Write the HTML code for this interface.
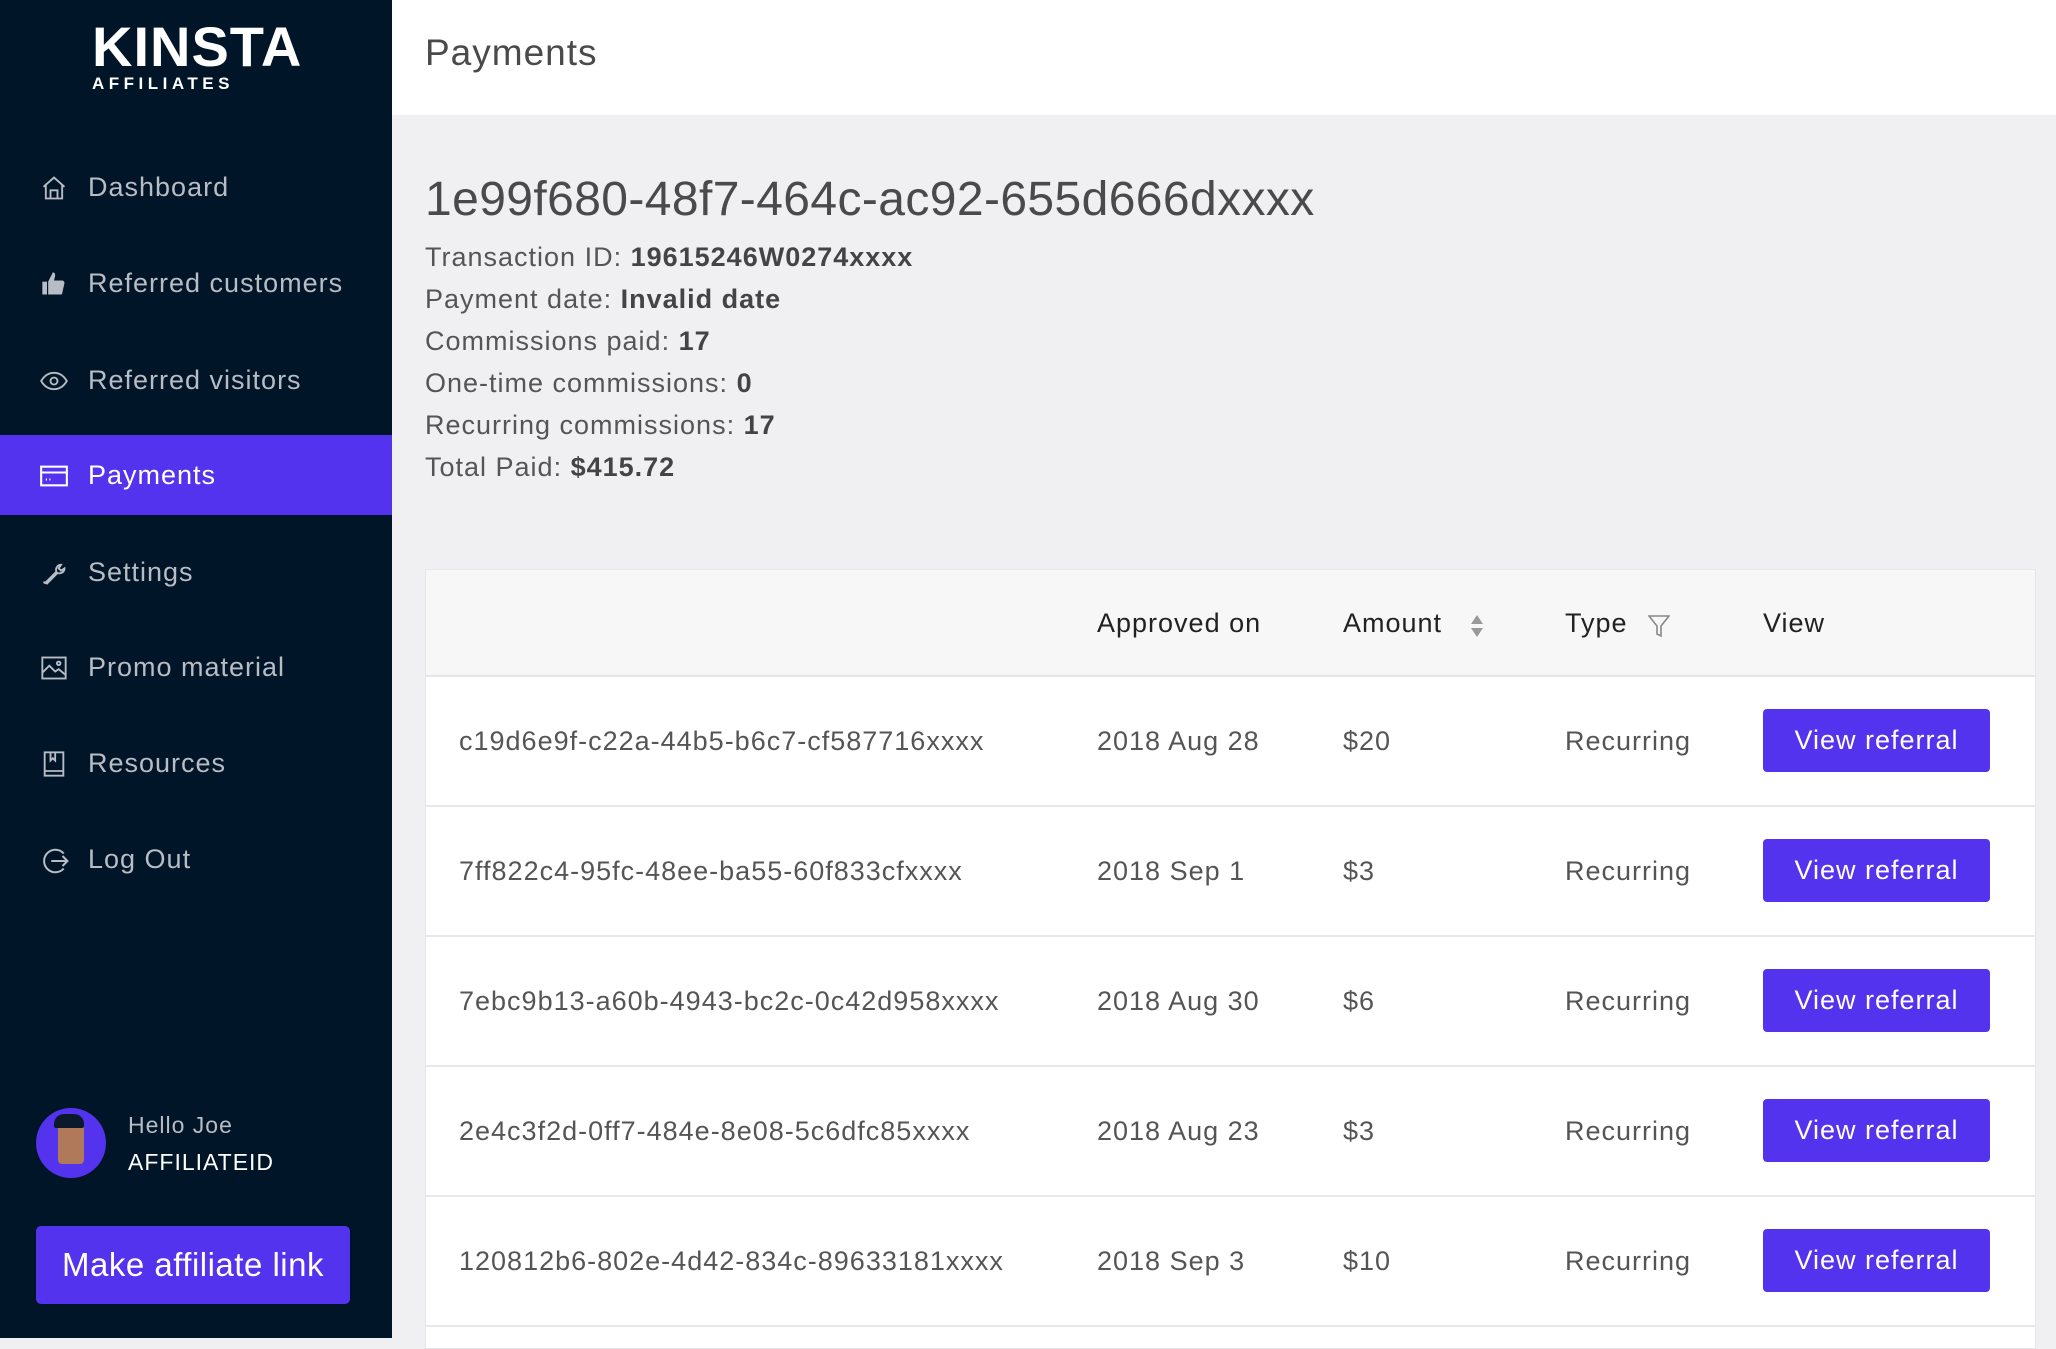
<!DOCTYPE html>
<html><head><meta charset="utf-8"><style>
*{margin:0;padding:0;box-sizing:border-box}
body{width:2056px;height:1338px;overflow:hidden;font-family:"Liberation Sans",sans-serif;background:#f0f0f2;position:relative;letter-spacing:1px}
.sb{position:absolute;left:0;top:0;width:392px;height:1338px;background:#011528}
.logo{position:absolute;left:92px;top:22px;color:#fff}
.logo .k{font-size:56px;font-weight:bold;letter-spacing:1px;line-height:50px}
.logo .a{font-size:17px;font-weight:bold;letter-spacing:4.5px;margin-top:2px}
.nav{position:absolute;left:0;width:392px;height:80px;color:#b8bcc4;font-size:27px;display:flex;align-items:center}
.nav svg{position:absolute;left:40px;top:27px}
.nav span{position:absolute;left:88px}
.nav.act{background:#5333ed;color:#fff}
.hdr{position:absolute;left:392px;top:0;right:0;height:115px;background:#fff}
.hdr h1{position:absolute;left:33px;top:32px;font-weight:normal;font-size:37px;color:#4a4a4a}
.id{position:absolute;left:425px;top:172px;font-size:48px;color:#4a4a4a;letter-spacing:0.4px}
.det{position:absolute;left:425px;font-size:27px;color:#555}
.det b{color:#444}
.tbl{position:absolute;left:425px;top:569px;width:1611px;height:780px;background:#fff;border:1px solid #e6e6e8}
.th{position:absolute;left:0;top:0;width:100%;height:107px;background:#f7f7f8;border-bottom:2px solid #e6e6e8}
.c{position:absolute;font-size:27px;color:#555}
.th .c{color:#222;top:38px}
.row{position:absolute;left:0;width:100%;height:130px;border-bottom:2px solid #e8e8ea}
.row .c{top:49px}
.btn{position:absolute;left:1337px;top:32px;width:227px;height:63px;background:#5333ed;color:#fff;border-radius:4px;font-size:27px;text-align:center;line-height:63px}
</style></head><body>
<div class="sb">
 <div class="logo"><div class="k">KINSTA</div><div class="a">AFFILIATES</div></div>
 <div class="nav" style="top:147px"><svg width="28" height="28" viewBox="0 0 24 24" fill="none" stroke="#b8bcc4" stroke-width="1.6"><path d="M3 11L12 3l9 8M5 9v12h14V9M9 21v-7h6v7"/></svg><span>Dashboard</span></div>
 <div class="nav" style="top:243px"><svg width="28" height="28" viewBox="0 0 24 24" fill="#b8bcc4"><rect x="2" y="10" width="4" height="11"/><path d="M7 10l4-8c2 0 2 2 2 3l-1 4h7c1 0 2 1 2 2l-2 9c0 1-1 1-2 1H7z"/></svg><span>Referred customers</span></div>
 <div class="nav" style="top:340px"><svg width="28" height="28" viewBox="0 0 24 24" fill="none" stroke="#b8bcc4" stroke-width="1.6"><path d="M1 12c3-5 7-7 11-7s8 2 11 7c-3 5-7 7-11 7S4 17 1 12z"/><circle cx="12" cy="12" r="3"/></svg><span>Referred visitors</span></div>
 <div class="nav act" style="top:435px"><svg width="28" height="28" viewBox="0 0 24 24" fill="none" stroke="#fff" stroke-width="1.8"><rect x="1" y="4" width="22" height="16"/><path d="M1 9h22M5 15h1M8 15h1"/></svg><span>Payments</span></div>
 <div class="nav" style="top:532px"><svg width="28" height="28" viewBox="0 0 24 24" fill="none" stroke="#b8bcc4" stroke-width="1.6"><path d="M3 20l3 1 9-9c3 1 6-1 6-4l-3 2-2-2 2-3c-3 0-5 3-4 6l-9 9z"/></svg><span>Settings</span></div>
 <div class="nav" style="top:627px"><svg width="28" height="28" viewBox="0 0 24 24" fill="none" stroke="#b8bcc4" stroke-width="1.6"><rect x="2" y="3" width="20" height="18"/><path d="M2 16l6-6 5 5 3-2 6 5"/><circle cx="16" cy="8" r="1.5"/></svg><span>Promo material</span></div>
 <div class="nav" style="top:723px"><svg width="28" height="28" viewBox="0 0 24 24" fill="none" stroke="#b8bcc4" stroke-width="1.6"><rect x="4" y="2" width="16" height="20"/><path d="M4 18h16M9 2v7l2-2 2 2V2"/></svg><span>Resources</span></div>
 <div class="nav" style="top:819px"><svg width="30" height="30" viewBox="0 0 24 24" fill="none" stroke="#b8bcc4" stroke-width="1.6"><path d="M19 6a9 9 0 1 0 0 12M9 12h13M18 8l4 4-4 4"/></svg><span>Log Out</span></div>
 <div style="position:absolute;left:36px;top:1108px;width:70px;height:70px;border-radius:50%;background:#5333ed;overflow:hidden"><div style="position:absolute;left:22px;top:12px;width:26px;height:44px;background:#b07a5a;border-radius:8px 8px 4px 4px"></div><div style="position:absolute;left:18px;top:6px;width:30px;height:14px;background:#0b1a2a;border-radius:10px 10px 2px 2px"></div></div>
 <div style="position:absolute;left:128px;top:1112px;font-size:23px;color:#b8bcc4">Hello Joe</div>
 <div style="position:absolute;left:128px;top:1149px;font-size:23px;color:#fff">AFFILIATEID</div>
 <div style="position:absolute;left:36px;top:1226px;width:314px;height:78px;background:#5333ed;border-radius:5px;color:#fff;font-size:33px;text-align:center;line-height:78px;letter-spacing:0.5px">Make affiliate link</div>
</div>
<div class="hdr"><h1>Payments</h1></div>
<div class="id">1e99f680-48f7-464c-ac92-655d666dxxxx</div>
<div class="det" style="top:242px">Transaction ID: <b>19615246W0274xxxx</b></div>
<div class="det" style="top:284px">Payment date: <b>Invalid date</b></div>
<div class="det" style="top:326px">Commissions paid: <b>17</b></div>
<div class="det" style="top:368px">One-time commissions: <b>0</b></div>
<div class="det" style="top:410px">Recurring commissions: <b>17</b></div>
<div class="det" style="top:452px">Total Paid: <b>$415.72</b></div>
<div class="tbl">
 <div class="th">
  <div class="c" style="left:671px">Approved on</div>
  <div class="c" style="left:917px">Amount</div>
  <svg style="position:absolute;left:1044px;top:44px" width="14" height="24" viewBox="0 0 14 24"><path d="M7 1l6 9H1z" fill="#999"/><path d="M7 23l6-9H1z" fill="#999"/></svg>
  <div class="c" style="left:1139px">Type</div>
  <svg style="position:absolute;left:1222px;top:44px" width="22" height="24" viewBox="0 0 22 24" fill="none" stroke="#888" stroke-width="1.6"><path d="M1 2h20l-8 10v10l-4-2v-8z"/></svg>
  <div class="c" style="left:1337px">View</div>
 </div>
 <div class="row" style="top:107px"><div class="c" style="left:33px">c19d6e9f-c22a-44b5-b6c7-cf587716xxxx</div><div class="c" style="left:671px">2018 Aug 28</div><div class="c" style="left:917px">$20</div><div class="c" style="left:1139px">Recurring</div><div class="btn">View referral</div></div>
 <div class="row" style="top:237px"><div class="c" style="left:33px">7ff822c4-95fc-48ee-ba55-60f833cfxxxx</div><div class="c" style="left:671px">2018 Sep 1</div><div class="c" style="left:917px">$3</div><div class="c" style="left:1139px">Recurring</div><div class="btn">View referral</div></div>
 <div class="row" style="top:367px"><div class="c" style="left:33px">7ebc9b13-a60b-4943-bc2c-0c42d958xxxx</div><div class="c" style="left:671px">2018 Aug 30</div><div class="c" style="left:917px">$6</div><div class="c" style="left:1139px">Recurring</div><div class="btn">View referral</div></div>
 <div class="row" style="top:497px"><div class="c" style="left:33px">2e4c3f2d-0ff7-484e-8e08-5c6dfc85xxxx</div><div class="c" style="left:671px">2018 Aug 23</div><div class="c" style="left:917px">$3</div><div class="c" style="left:1139px">Recurring</div><div class="btn">View referral</div></div>
 <div class="row" style="top:627px"><div class="c" style="left:33px">120812b6-802e-4d42-834c-89633181xxxx</div><div class="c" style="left:671px">2018 Sep 3</div><div class="c" style="left:917px">$10</div><div class="c" style="left:1139px">Recurring</div><div class="btn">View referral</div></div>
</div>
</body></html>
